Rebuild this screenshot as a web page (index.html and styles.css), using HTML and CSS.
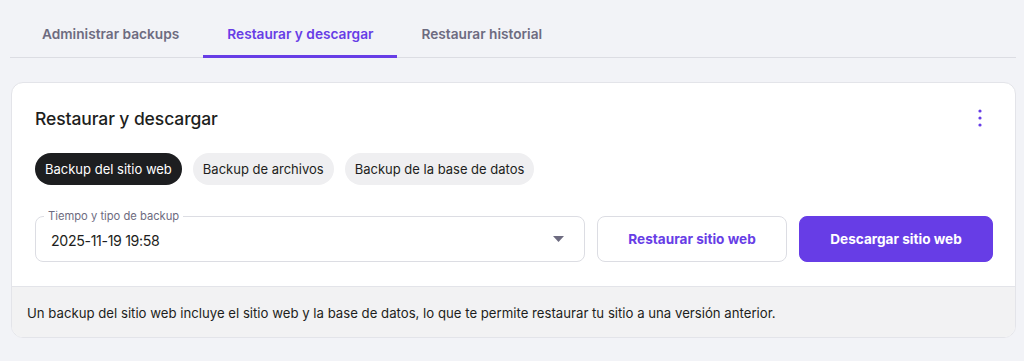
FILE: index.html
```html
<!DOCTYPE html>
<html lang="es">
<head>
<meta charset="utf-8">
<title>Restaurar y descargar</title>
<link rel="stylesheet" href="styles.css">
</head>
<body>
  <nav class="tabs">
    <a class="tab">Administrar backups</a>
    <a class="tab tab-active">Restaurar y descargar</a>
    <a class="tab">Restaurar historial</a>
  </nav>

  <section class="card">
    <div class="card-body">
      <div class="card-header">
        <h2 class="card-title">Restaurar y descargar</h2>
        <button class="kebab" aria-label="Más opciones">
          <svg width="4" height="18" viewBox="0 0 4 18"><circle cx="2" cy="2" r="1.6"/><circle cx="2" cy="9" r="1.6"/><circle cx="2" cy="16" r="1.6"/></svg>
        </button>
      </div>

      <div class="pills">
        <span class="pill pill-active">Backup del sitio web</span>
        <span class="pill">Backup de archivos</span>
        <span class="pill">Backup de la base de datos</span>
      </div>

      <div class="actions">
        <div class="select">
          <span class="select-label">Tiempo y tipo de backup</span>
          <span class="select-value">2025-11-19 19:58</span>
          <svg class="caret" width="11" height="6" viewBox="0 0 11 6"><path d="M0 0h11L5.5 6z"/></svg>
        </div>
        <button class="btn btn-outline">Restaurar sitio web</button>
        <button class="btn btn-primary">Descargar sitio web</button>
      </div>
    </div>
    <footer class="card-footer">Un backup del sitio web incluye el sitio web y la base de datos, lo que te permite restaurar tu sitio a una versión anterior.</footer>
  </section>
</body>
</html>
```

FILE: styles.css
```css
* { box-sizing: border-box; }

body {
  margin: 0;
  padding-top: 10px;
  background: #f2f3f7;
  font-family: "Inter", "DejaVu Sans", sans-serif;
  color: #1d1e20;
  height: 361px;
  overflow: hidden;
}

.tabs {
  display: flex;
  margin: 0 8px 0 10px;
  padding-left: 8px;
  border-bottom: 1px solid #dcdde3;
}

.tab {
  height: 48px;
  padding: 3px 24px 0;
  display: flex;
  align-items: center;
  font-size: 13.7px;
  font-weight: 600;
  color: #6d6b80;
  border-bottom: 3px solid transparent;
  margin-bottom: -1px;
}

.tab-active {
  color: #673de6;
  border-bottom-color: #673de6;
}

.card {
  margin: 24px 8px 0 11px;
  background: #fff;
  border: 1px solid #e3e4e9;
  border-radius: 12px;
  overflow: hidden;
}

.card-body {
  padding: 22px 22px 24px 23px;
}

.card-header {
  display: flex;
  justify-content: space-between;
  align-items: center;
  height: 26px;
}

.card-title {
  margin: 0;
  font-size: 17.5px;
  font-weight: 500;
  color: #1d1e20;
  letter-spacing: -0.1px;
}

.kebab {
  border: 0;
  background: none;
  width: 24px;
  height: 24px;
  padding: 0;
  margin-right: 1px;
  display: flex;
  align-items: center;
  justify-content: center;
  fill: #673de6;
}

.pills {
  display: flex;
  gap: 11px;
  margin-top: 22px;
}

.pill {
  height: 32px;
  padding: 0 10px;
  border-radius: 16px;
  background: #efeff1;
  font-size: 13px;
  display: flex;
  align-items: center;
  color: #1d1e20;
}

.pill-active {
  background: #1d1e20;
  color: #fff;
}

.actions {
  display: flex;
  gap: 12px;
  margin-top: 31px;
  height: 46px;
}

.select {
  position: relative;
  flex: 1;
  border: 1px solid #dcdde3;
  border-radius: 8px;
  display: flex;
  align-items: center;
  padding: 0 20px 0 15px;
}

.select-label {
  position: absolute;
  left: 8px;
  top: -8px;
  padding: 0 4px;
  background: #fff;
  font-size: 11.2px;
  line-height: 14px;
  color: #6d6b80;
}

.select-value {
  flex: 1;
  font-size: 14.2px;
  letter-spacing: -0.35px;
  color: #1d1e20;
  padding-top: 2px;
}

.caret {
  fill: #6d6b80;
}

.btn {
  height: 46px;
  border-radius: 8px;
  font-family: inherit;
  font-size: 13.6px;
  font-weight: 700;
  cursor: pointer;
}

.btn-outline {
  width: 190px;
  background: #fff;
  border: 1px solid #dcdde3;
  color: #673de6;
}

.btn-primary {
  width: 194px;
  background: #673de6;
  border: 1px solid #673de6;
  color: #fff;
}

.card-footer {
  background: #f2f2f3;
  border-top: 1px solid #e3e4e9;
  padding: 16px 15px 14px;
  font-size: 13.2px;
  line-height: 20px;
  color: #1d1e20;
}
```
